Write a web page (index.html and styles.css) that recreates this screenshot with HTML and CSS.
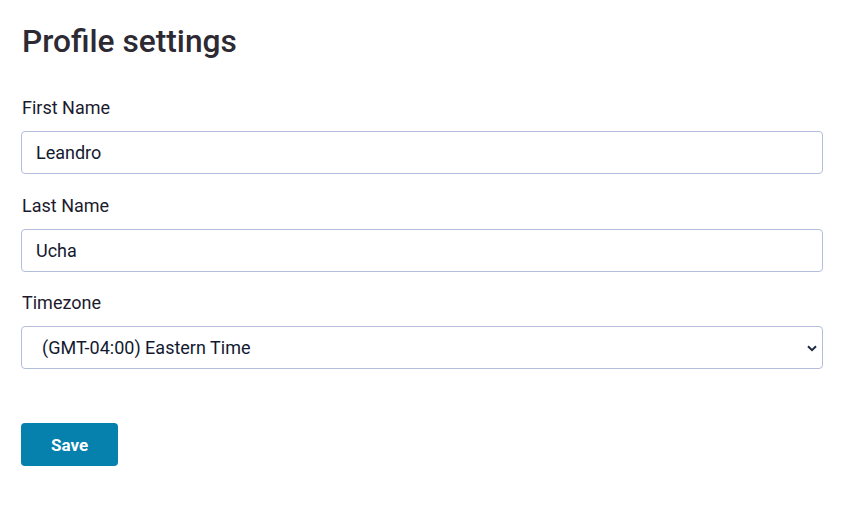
FILE: index.html
```html
<!DOCTYPE html>
<html lang="en">
<head>
<meta charset="utf-8">
<title>Profile settings</title>
<link rel="stylesheet" href="styles.css">
</head>
<body>
<main class="card">
  <h1 class="title">Profile settings</h1>
  <form class="form">
    <div class="field">
      <label class="label" for="first">First Name</label>
      <input class="input" id="first" type="text" value="Leandro">
    </div>
    <div class="field">
      <label class="label" for="last">Last Name</label>
      <input class="input" id="last" type="text" value="Ucha">
    </div>
    <div class="field">
      <label class="label" for="tz">Timezone</label>
      <div class="select-wrap">
        <select class="select" id="tz">
          <option>(GMT-04:00) Eastern Time</option>
        </select>
        <svg class="chevron" width="10" height="7" viewBox="0 0 10 7"><path d="M1 1.2 L5 5.2 L9 1.2" fill="none" stroke="#1d2a44" stroke-width="2"/></svg>
      </div>
    </div>
    <div class="actions">
      <button class="btn" type="button">Save</button>
    </div>
  </form>
</main>
</body>
</html>
```

FILE: styles.css
```css
* { box-sizing: border-box; }
html, body { margin: 0; padding: 0; background: #ffffff; }
body {
  font-family: Roboto, "Liberation Sans", Arial, sans-serif;
  color: #1c1b2e;
}
.card {
  padding: 23px 22px 0 21px;
}
.title {
  margin: 0 0 35px 1px;
  font-size: 31.7px;
  line-height: 38px;
  font-weight: 500;
  color: #2d2a33;
}
.form {
  display: flex;
  flex-direction: column;
  gap: 19.5px;
}
.field {
  display: flex;
  flex-direction: column;
}
.label {
  font-size: 18px;
  line-height: 24px;
  margin: 0 0 11px 1px;
  color: #1c1b2e;
}
.input, .select {
  width: 100%;
  height: 43px;
  border: 1px solid #b4bedc;
  border-radius: 4px;
  background: #ffffff;
  font-family: inherit;
  font-size: 18px;
  color: #131a30;
  padding: 0 14px;
  outline: none;
}
.select-wrap {
  position: relative;
}
.select {
  appearance: none;
  -webkit-appearance: none;
  padding-left: 20px;
}
.chevron {
  position: absolute;
  right: 6px;
  top: 19px;
  pointer-events: none;
}
.actions {
  margin-top: 34.5px;
}
.btn {
  width: 97px;
  height: 43px;
  border: none;
  border-radius: 4px;
  background: #0680ad;
  color: #ffffff;
  font-family: inherit;
  font-size: 17px;
  font-weight: 700;
}
```
